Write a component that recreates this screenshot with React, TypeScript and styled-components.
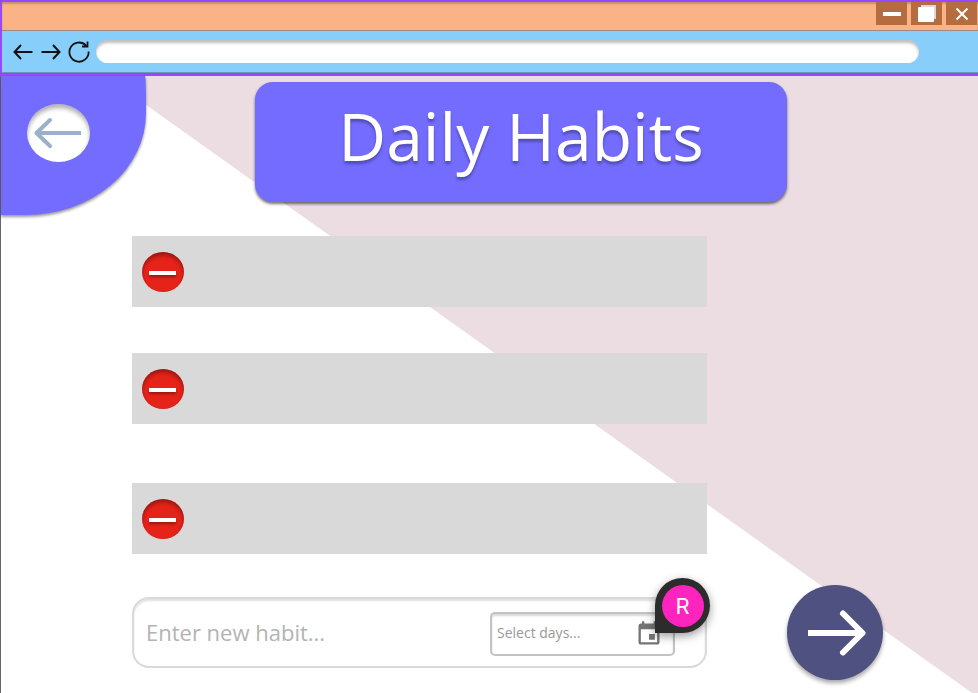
import React from "react";
import styled, { createGlobalStyle } from "styled-components";

const GlobalStyle = createGlobalStyle`
  * { box-sizing: border-box; }
  body { margin: 0; }
  button, input { font: inherit; }
`;

const sans = `"Open Sans", "Noto Sans", sans-serif`;

const Page = styled.div`
  display: flex;
  flex-direction: column;
  min-height: 100vh;
  font-family: ${sans};
  background: #ffffff;
`;

const BrowserFrame = styled.header`
  border: solid #9747ff;
  border-width: 2px 0 3px 2px;
`;

const TitleBar = styled.div`
  display: flex;
  justify-content: flex-end;
  gap: 4px;
  height: 29px;
  padding-right: 1px;
  background: #fab387;
  border-bottom: 1px solid #a08a80;
  box-shadow: inset 0 2px 2px rgba(0, 0, 0, 0.2);
`;

const WindowButton = styled.button`
  display: flex;
  align-items: center;
  justify-content: center;
  width: 31px;
  height: 23px;
  padding: 0;
  border: 0;
  background: #b56d40;
`;

const Toolbar = styled.div`
  display: flex;
  align-items: center;
  height: 42px;
  padding: 0 59px 0 7px;
  background: #87cefa;
  border-bottom: 1px solid #6f93b8;
`;

const ToolButton = styled.button`
  display: flex;
  align-items: center;
  justify-content: center;
  flex: none;
  width: 28px;
  height: 28px;
  padding: 0;
  border: 0;
  background: none;
`;

const AddressInput = styled.input`
  flex: 1;
  min-width: 0;
  height: 23px;
  margin-left: 3px;
  padding: 0 12px;
  border: 0;
  border-radius: 12px;
  background: #ffffff;
  font-size: 14px;
  box-shadow: inset 0 3px 3px rgba(0, 0, 0, 0.25);
`;

const Main = styled.main`
  position: relative;
  isolation: isolate;
  flex: 1;
  padding-bottom: 25px;
  border-left: 1px solid #666666;

  &::before {
    content: "";
    position: absolute;
    inset: 0;
    z-index: -1;
    background: #ebdde2;
    clip-path: polygon(10.7% 0, 100% 0, 100% 100%, 99.4% 100%);
  }
`;

const Banner = styled.div`
  display: flex;
  align-items: flex-start;
  padding-right: 191px;
`;

const BackCorner = styled.div`
  flex: none;
  width: 145px;
  height: 139px;
  padding: 28px 0 0 26px;
  border-radius: 0 1px 120px 0 / 0 24px 102px 0;
  background: #736cff;
  box-shadow: 0 2px 3px rgba(0, 0, 0, 0.4);
`;

const BackButton = styled.button`
  display: flex;
  align-items: center;
  justify-content: center;
  width: 63px;
  height: 58px;
  padding: 0 2px 0 0;
  border: 0;
  border-radius: 50%;
  background: #ffffff;
  box-shadow: inset 0 4px 4px rgba(0, 0, 0, 0.3);
`;

const Title = styled.h1`
  flex: 1;
  margin: 6px 0 0 109px;
  height: 120px;
  border-radius: 18px;
  background: #736cff;
  box-shadow: 0 2px 3px rgba(0, 0, 0, 0.55);
  color: #ffffff;
  font-size: 66px;
  font-weight: 400;
  line-height: 106px;
  text-align: center;
  text-shadow: 0 3px 3px rgba(0, 0, 0, 0.3);
`;

const Content = styled.div`
  display: grid;
  grid-template-columns: minmax(0, 1fr) 271px;
  padding-left: 131px;
`;

const HabitList = styled.ul`
  grid-column: 1;
  margin: 21px 0 0;
  padding: 0;
  list-style: none;
`;

const HabitRow = styled.li<{ $gap: number }>`
  display: flex;
  align-items: center;
  height: 71px;
  margin-bottom: ${(p) => p.$gap}px;
  padding-left: 10px;
  background: #d9d9d9;
`;

const RemoveButton = styled.button`
  display: flex;
  align-items: center;
  justify-content: center;
  width: 42px;
  height: 40px;
  padding: 2px 1px 0 0;
  border: 0;
  border-radius: 50%;
  background: #e62319;
  box-shadow: inset 0 3px 4px rgba(0, 0, 0, 0.35);
`;

const MinusBar = styled.span`
  width: 27px;
  height: 4px;
  background: #ffffff;
  box-shadow: 0 2px 3px rgba(0, 0, 0, 0.35);
`;

const HabitForm = styled.form`
  position: relative;
  grid-column: 1;
  display: flex;
  align-items: center;
  height: 71px;
  padding: 0 30px 0 12px;
  border: 2px solid #dadada;
  border-radius: 17px;
  background: #ffffff;
  box-shadow: inset 0 2px 2px rgba(0, 0, 0, 0.12);
`;

const HabitInput = styled.input`
  flex: 1;
  min-width: 0;
  padding: 0 0 2px;
  border: 0;
  outline: 0;
  background: none;
  font-size: 22px;
  line-height: 30px;

  &::placeholder { color: #b3b3b3; opacity: 1; }
`;

const DayPicker = styled.div`
  display: flex;
  align-items: center;
  width: 185px;
  height: 44px;
  margin-top: 2px;
  padding: 0 10px 0 5px;
  border: 2px solid #c2c2c2;
  border-radius: 5px;
  background: #ffffff;
  box-shadow: inset 0 2px 2px rgba(0, 0, 0, 0.15);
`;

const DayInput = styled.input`
  flex: 1;
  min-width: 0;
  padding: 0 0 2px;
  border: 0;
  outline: 0;
  background: none;
  font-size: 14px;
  line-height: 20px;
  font-weight: 500;

  &::placeholder { color: #999999; opacity: 1; }
`;

const CalendarButton = styled.button`
  display: flex;
  padding: 0;
  border: 0;
  background: none;
  color: #757575;
`;

const AvatarPin = styled.div`
  position: absolute;
  top: -21px;
  right: -5px;
  display: flex;
  align-items: center;
  justify-content: center;
  width: 55px;
  height: 55px;
  border-radius: 50% 50% 50% 0;
  background: #2c2c2c;
  box-shadow: 0 3px 10px rgba(0, 0, 0, 0.4);
`;

const Avatar = styled.span`
  width: 42px;
  height: 42px;
  border-radius: 50%;
  background: #ff24bd;
  color: #ffffff;
  font-family: Inter, sans-serif;
  font-size: 22px;
  line-height: 42px;
  text-align: center;
`;

const NextButton = styled.button`
  grid-column: 2;
  display: flex;
  align-items: center;
  justify-content: center;
  align-self: center;
  width: 96px;
  height: 95px;
  margin: -12px 0 -12px 80px;
  padding: 0 0 0 4px;
  border: 0;
  border-radius: 50%;
  background: #4f5180;
  box-shadow: 0 3px 4px rgba(0, 0, 0, 0.35);
`;

const habits = [
  { id: 1, gap: 46 },
  { id: 2, gap: 59 },
  { id: 3, gap: 43 },
];

export default function App() {
  return (
    <Page>
      <GlobalStyle />
      <BrowserFrame>
        <TitleBar>
          <WindowButton aria-label="Minimize">
            <svg width="18" height="4"><rect width="18" height="4" fill="#fff" /></svg>
          </WindowButton>
          <WindowButton aria-label="Restore">
            <svg width="20" height="18">
              <rect x="4" y="0" width="15" height="14" fill="#d9d9d9" />
              <rect x="1" y="2" width="16" height="15" rx="1" fill="#fff" />
            </svg>
          </WindowButton>
          <WindowButton aria-label="Close">
            <svg width="14" height="14" viewBox="0 0 14 14">
              <path d="M1.5 1.5l11 11M12.5 1.5l-11 11" stroke="#fff" strokeWidth="2" />
            </svg>
          </WindowButton>
        </TitleBar>
        <Toolbar>
          <ToolButton aria-label="Back">
            <svg width="20" height="16" viewBox="0 0 20 16" fill="none" stroke="#111" strokeWidth="2">
              <path d="M19.5 8H2M8 1L1.500 8L8 15" />
            </svg>
          </ToolButton>
          <ToolButton aria-label="Forward">
            <svg width="20" height="16" viewBox="0 0 20 16" fill="none" stroke="#111" strokeWidth="2">
              <path d="M0.500 8H18M12 1L18.500 8L12 15" />
            </svg>
          </ToolButton>
          <ToolButton aria-label="Reload">
            <svg width="24" height="24" viewBox="0 0 24 24" fill="none" stroke="#111" strokeWidth="1.800">
              <path d="M21.600 11.500A9.600 9.600 0 1 1 19 5.500M20.500 1.500V6.500H15" />
            </svg>
          </ToolButton>
          <AddressInput type="text" aria-label="Address" />
        </Toolbar>
      </BrowserFrame>
      <Main>
        <Banner>
          <BackCorner>
            <BackButton aria-label="Go back">
              <svg width="49" height="32" viewBox="0 0 49 32" fill="none" stroke="#9bb0ca" strokeWidth="4">
                <path d="M48 16H4" />
                <path d="M17 3L3.500 16L17 29" strokeLinecap="round" strokeLinejoin="round" />
              </svg>
            </BackButton>
          </BackCorner>
          <Title>Daily Habits</Title>
        </Banner>
        <Content>
          <HabitList>
            {habits.map((habit) => (
              <HabitRow key={habit.id} $gap={habit.gap}>
                <RemoveButton aria-label="Remove habit"><MinusBar /></RemoveButton>
              </HabitRow>
            ))}
          </HabitList>
          <HabitForm onSubmit={(e) => e.preventDefault()}>
            <HabitInput type="text" aria-label="New habit" placeholder="Enter new habit..." />
            <DayPicker>
              <DayInput type="text" aria-label="Days" placeholder="Select days..." />
              <CalendarButton type="button" aria-label="Open calendar">
                <svg width="28" height="28" viewBox="0 0 24 24" fill="currentColor">
                  <path d="M17 12h-5v5h5v-5zM16 1v2H8V1H6v2H5c-1.110 0-1.990.9-1.990 2L3 19c0 1.100.89 2 2 2h14c1.100 0 2-.9 2-2V5c0-1.100-.9-2-2-2h-1V1h-2zm3 18H5V8h14v11z" />
                </svg>
              </CalendarButton>
            </DayPicker>
            <AvatarPin><Avatar>R</Avatar></AvatarPin>
          </HabitForm>
          <NextButton aria-label="Next">
            <svg width="60" height="48" viewBox="0 0 60 48" fill="none" stroke="#fff" strokeWidth="6">
              <path d="M1 24H55" />
              <path d="M36 4.500L55.500 24L36 43.500" strokeLinecap="round" strokeLinejoin="round" />
            </svg>
          </NextButton>
        </Content>
      </Main>
    </Page>
  );
}
